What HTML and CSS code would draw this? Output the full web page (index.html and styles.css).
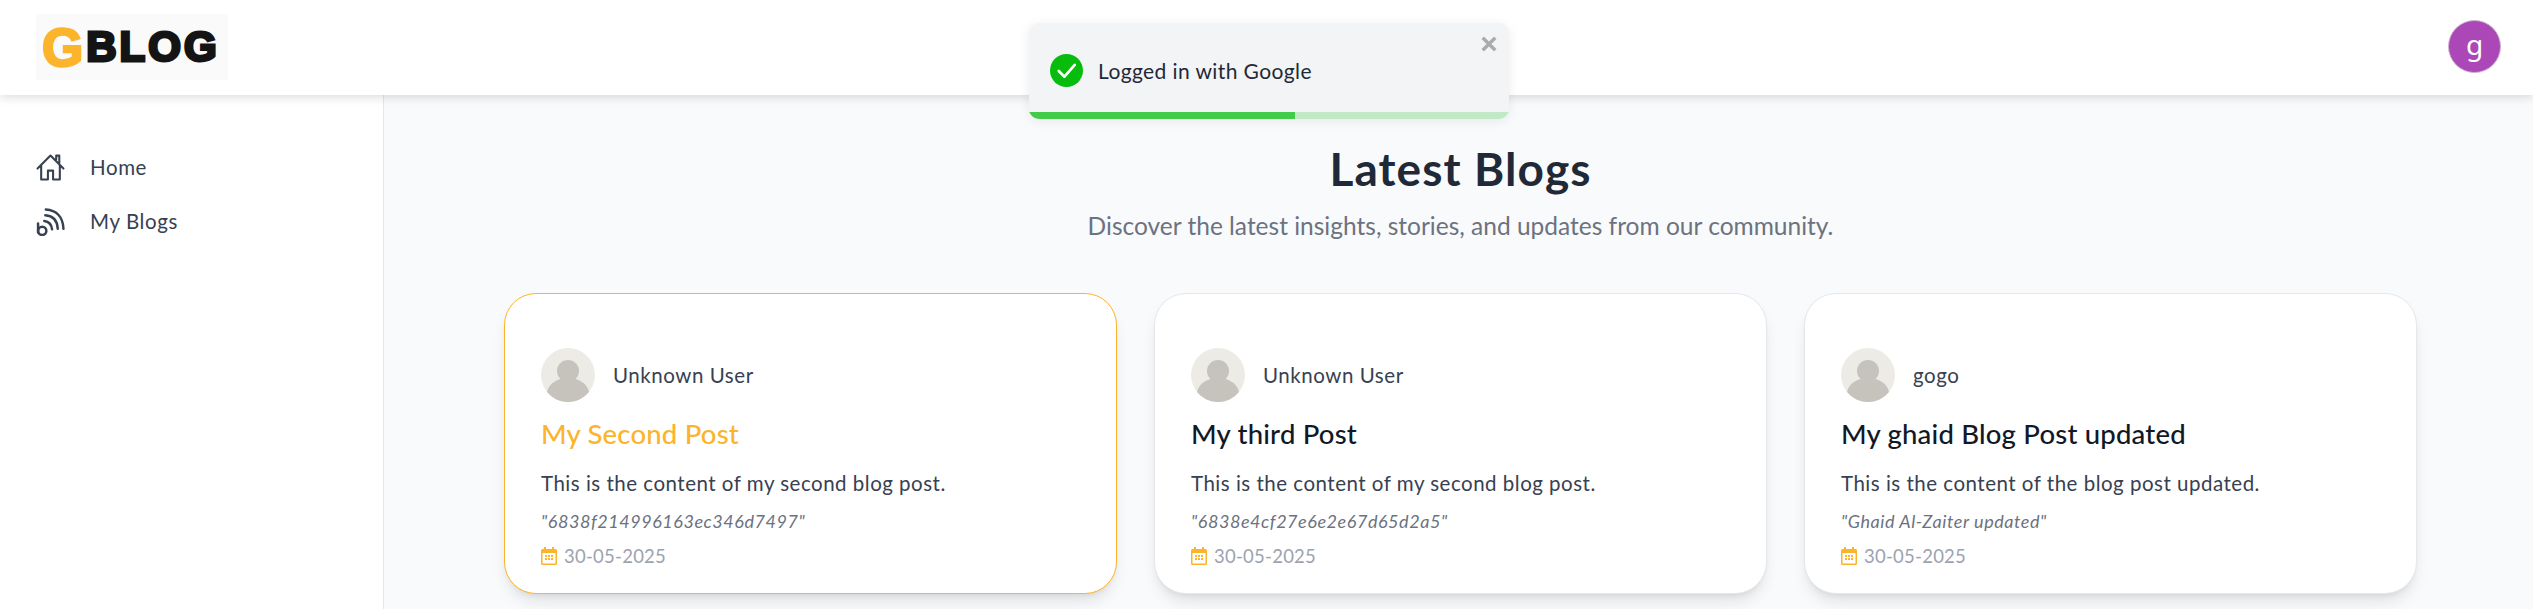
FILE: index.html

```html
<!doctype html>
<html lang="en">
<head>
  <meta charset="UTF-8">
  <title>GBlog</title>
  <link rel="stylesheet" href="styles.css">
</head>
<body>
  <header class="topbar">
    <a class="logo" href="#"><span class="logo-g">G</span><span class="logo-rest">BLOG</span></a>
    <div class="user-badge">g</div>
  </header>

  <div class="toast">
    <div class="toast-body">
      <svg class="toast-icon" viewBox="0 0 32 32">
        <circle cx="16" cy="16" r="16" fill="#07bc0c"/>
        <path d="M8.5 16.5l5.5 5.5L24 10.5" fill="none" stroke="#fff" stroke-width="2.6" stroke-linecap="round" stroke-linejoin="round"/>
      </svg>
      <span>Logged in with Google</span>
    </div>
    <svg class="toast-close" viewBox="0 0 14 14">
      <path d="M1.5 1.5l11 11M12.5 1.5l-11 11" fill="none" stroke="#a9abaf" stroke-width="3"/>
    </svg>
    <div class="toast-track"><div class="toast-fill"></div></div>
  </div>

  <div class="layout">
    <nav class="sidebar">
      <a class="nav-link" href="#">
        <svg class="nav-icon" viewBox="0 0 28 28">
          <path d="M1.5 15L14 2.5 26.5 15M19.5 6.5V2.5h3v7.5M5 12v13.5h6.5V17h5v8.5H23V12" fill="none" stroke="#374151" stroke-width="2" stroke-linejoin="round" stroke-linecap="round"/>
        </svg>
        Home
      </a>
      <a class="nav-link" href="#">
        <svg class="nav-icon" viewBox="0 0 28 28">
          <g fill="none" stroke="#374151" stroke-width="2.4" stroke-linecap="round">
            <path d="M2 16v8.5"/>
            <circle cx="6" cy="23" r="4"/>
            <path d="M8 13.5c4.5 .5 7 3.5 7.5 8"/>
            <path d="M9 8c7 .5 11.5 5 12 13"/>
            <path d="M9.5 2.5c10 .5 16.5 7 17 18.5"/>
          </g>
        </svg>
        My Blogs
      </a>
    </nav>

    <main class="content">
      <h1 class="page-title">Latest Blogs</h1>
      <p class="page-sub">Discover the latest insights, stories, and updates from our community.</p>

      <div class="cards">
        <article class="card card-active">
          <div class="author">
            <svg class="avatar" viewBox="0 0 54 54">
              <circle cx="27" cy="27" r="27" fill="#edebe6"/>
              <circle cx="27" cy="23" r="11" fill="#c5c3bc"/>
              <path d="M6 44c2-9 11-14 21-14s19 5 21 14a27 27 0 0 1-42 0z" fill="#c5c3bc"/>
            </svg>
            <span>Unknown User</span>
          </div>
          <h2 class="card-title">My Second Post</h2>
          <p class="card-text">This is the content of my second blog post.</p>
          <p class="card-quote">"6838f214996163ec346d7497"</p>
          <p class="card-date">
            <svg class="cal" viewBox="0 0 16 18">
              <path d="M3 0h2v2h6V0h2v2h1.5A1.5 1.5 0 0 1 16 3.5v13a1.5 1.5 0 0 1-1.5 1.5h-13A1.5 1.5 0 0 1 0 16.5v-13A1.5 1.5 0 0 1 1.5 2H3z" fill="#fbb42c"/>
              <path d="M1.5 6h13v10.5h-13z" fill="#fff"/>
              <path d="M4 8h2v2H4zM7 8h2v2H7zM10 8h2v2h-2zM4 11h2v2H4zM7 11h2v2H7zM10 11h2v2h-2z" fill="#fbb42c"/>
            </svg>
            30-05-2025
          </p>
        </article>

        <article class="card">
          <div class="author">
            <svg class="avatar" viewBox="0 0 54 54">
              <circle cx="27" cy="27" r="27" fill="#edebe6"/>
              <circle cx="27" cy="23" r="11" fill="#c5c3bc"/>
              <path d="M6 44c2-9 11-14 21-14s19 5 21 14a27 27 0 0 1-42 0z" fill="#c5c3bc"/>
            </svg>
            <span>Unknown User</span>
          </div>
          <h2 class="card-title">My third Post</h2>
          <p class="card-text">This is the content of my second blog post.</p>
          <p class="card-quote">"6838e4cf27e6e2e67d65d2a5"</p>
          <p class="card-date">
            <svg class="cal" viewBox="0 0 16 18">
              <path d="M3 0h2v2h6V0h2v2h1.5A1.5 1.5 0 0 1 16 3.5v13a1.5 1.5 0 0 1-1.5 1.5h-13A1.5 1.5 0 0 1 0 16.5v-13A1.5 1.5 0 0 1 1.5 2H3z" fill="#fbb42c"/>
              <path d="M1.5 6h13v10.5h-13z" fill="#fff"/>
              <path d="M4 8h2v2H4zM7 8h2v2H7zM10 8h2v2h-2zM4 11h2v2H4zM7 11h2v2H7zM10 11h2v2h-2z" fill="#fbb42c"/>
            </svg>
            30-05-2025
          </p>
        </article>

        <article class="card">
          <div class="author">
            <svg class="avatar" viewBox="0 0 54 54">
              <circle cx="27" cy="27" r="27" fill="#edebe6"/>
              <circle cx="27" cy="23" r="11" fill="#c5c3bc"/>
              <path d="M6 44c2-9 11-14 21-14s19 5 21 14a27 27 0 0 1-42 0z" fill="#c5c3bc"/>
            </svg>
            <span>gogo</span>
          </div>
          <h2 class="card-title">My ghaid Blog Post updated</h2>
          <p class="card-text">This is the content of the blog post updated.</p>
          <p class="card-quote">"Ghaid Al-Zaiter updated"</p>
          <p class="card-date">
            <svg class="cal" viewBox="0 0 16 18">
              <path d="M3 0h2v2h6V0h2v2h1.5A1.5 1.5 0 0 1 16 3.5v13a1.5 1.5 0 0 1-1.5 1.5h-13A1.5 1.5 0 0 1 0 16.5v-13A1.5 1.5 0 0 1 1.5 2H3z" fill="#fbb42c"/>
              <path d="M1.5 6h13v10.5h-13z" fill="#fff"/>
              <path d="M4 8h2v2H4zM7 8h2v2H7zM10 8h2v2h-2zM4 11h2v2H4zM7 11h2v2H7zM10 11h2v2h-2z" fill="#fbb42c"/>
            </svg>
            30-05-2025
          </p>
        </article>
      </div>
    </main>
  </div>
</body>
</html>
```

FILE: styles.css

```css
* {
  box-sizing: border-box;
}

body {
  margin: 0;
  height: 100vh;
  overflow: hidden;
  background: #f9fafb;
  font-family: "Lato", "Noto Sans", sans-serif;
  color: #374151;
}

a {
  color: inherit;
  text-decoration: none;
}

.topbar {
  position: relative;
  z-index: 2;
  height: 95px;
  padding: 14px 32px 14px 36px;
  display: flex;
  align-items: flex-start;
  justify-content: space-between;
  background: #fff;
  box-shadow: 0 2px 10px rgba(0, 0, 0, 0.15);
}

.logo {
  width: 192px;
  height: 66px;
  padding-left: 6px;
  display: flex;
  align-items: center;
  gap: 3px;
  background: #fafafa;
  font-family: "Liberation Sans", sans-serif;
  font-weight: 700;
}

.logo-g {
  font-size: 53px;
  color: #fbb42c;
  -webkit-text-stroke: 2.5px currentColor;
}

.logo-rest {
  font-size: 42px;
  color: #141414;
  letter-spacing: 3px;
  -webkit-text-stroke: 3px currentColor;
}

.user-badge {
  width: 53px;
  height: 53px;
  margin-top: 6px;
  border-radius: 50%;
  display: flex;
  align-items: center;
  justify-content: center;
  background: #ab47b7;
  border: 1px solid #cbb5ce;
  color: #fff;
  font-family: "Noto Sans", sans-serif;
  font-size: 28px;
  padding-bottom: 5px;
}

.toast {
  position: absolute;
  z-index: 3;
  left: 1029px;
  top: 23px;
  width: 480px;
  height: 96px;
  border-radius: 10px;
  overflow: hidden;
  background: #f3f4f6;
  box-shadow: 0 2px 12px rgba(0, 0, 0, 0.08);
  color: #1f2937;
  font-size: 21px;
  letter-spacing: 0.4px;
}

.toast-body {
  height: 96px;
  padding-left: 21px;
  padding-bottom: 2px;
  display: flex;
  align-items: center;
  gap: 15px;
}

.toast-icon {
  width: 33px;
  height: 33px;
  flex: none;
}

.toast-close {
  position: absolute;
  right: 12px;
  top: 13px;
  width: 16px;
  height: 16px;
}

.toast-track {
  position: absolute;
  left: 0;
  right: 0;
  bottom: 0;
  height: 7px;
  background: #c2e9c5;
}

.toast-fill {
  width: 266px;
  height: 100%;
  background: #41cb48;
}

.layout {
  display: flex;
  height: calc(100vh - 95px);
}

.sidebar {
  width: 384px;
  flex: none;
  padding: 57px 0 0 36px;
  background: #fff;
  border-right: 1px solid #e5e7eb;
  display: flex;
  flex-direction: column;
  gap: 24px;
}

.nav-link {
  display: flex;
  align-items: center;
  gap: 25px;
  height: 30px;
  font-size: 20.5px;
  letter-spacing: 0.6px;
}

.nav-icon {
  width: 29px;
  height: 29px;
  flex: none;
}

.content {
  flex: 1;
  padding: 0 116px 0 120px;
  min-width: 0;
}

.page-title {
  margin: 48px 0 0;
  text-align: center;
  font-size: 46px;
  line-height: 52px;
  font-weight: 700;
  letter-spacing: 1.1px;
  color: #1f2937;
}

.page-sub {
  margin: 15px 0 0;
  text-align: center;
  font-size: 24.5px;
  line-height: 32px;
  color: #6b7280;
}

.cards {
  margin-top: 51px;
  display: grid;
  grid-template-columns: repeat(3, 1fr);
  gap: 37px;
}

.card {
  height: 301px;
  padding: 54px 36px 0;
  border: 1px solid #e5e7eb;
  border-radius: 32px;
  background: #fff;
  box-shadow: 0 10px 15px -3px rgba(0, 0, 0, 0.1), 0 4px 6px -4px rgba(0, 0, 0, 0.1);
}

.card-active {
  border-color: #fbb42c;
}

.author {
  display: flex;
  align-items: center;
  gap: 18px;
  font-size: 20.5px;
  letter-spacing: 0.55px;
}

.avatar {
  width: 54px;
  height: 54px;
  flex: none;
}

.card-title {
  margin: 14px 0 0;
  font-size: 27.5px;
  line-height: 36px;
  font-weight: 500;
  letter-spacing: 0.2px;
  color: #111827;
}

.card-active .card-title {
  color: #fbb42c;
}

.card-text {
  margin: 17px 0 0;
  font-size: 20.5px;
  line-height: 28px;
  letter-spacing: 0.5px;
}

.card-quote {
  margin: 12px 0 0;
  font-size: 18px;
  line-height: 24px;
  font-style: italic;
  letter-spacing: 0.55px;
  color: #6b7280;
}

.card-date {
  margin: 11px 0 0;
  display: flex;
  align-items: center;
  gap: 7px;
  font-size: 18.5px;
  line-height: 24px;
  letter-spacing: 0.25px;
  color: #9ca3af;
}

.cal {
  width: 16px;
  height: 18px;
  flex: none;
}
```
